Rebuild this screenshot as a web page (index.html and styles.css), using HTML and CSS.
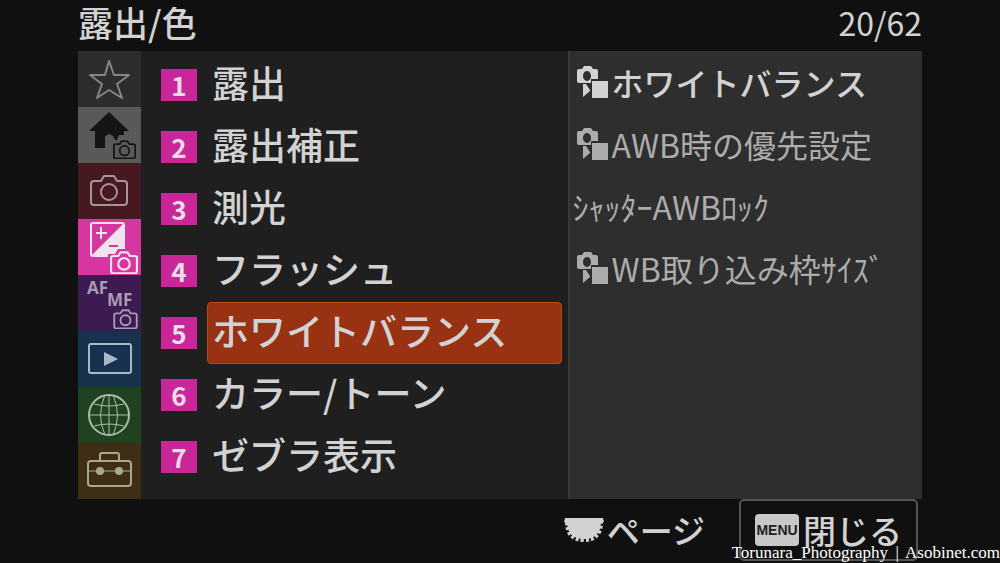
FILE: index.html
```html
<!DOCTYPE html>
<html lang="ja">
<head>
    <meta charset="UTF-8">
    <meta name="viewport" content="width=device-width, initial-scale=1.0">
    <title>露出/色</title>
    <link rel="stylesheet" href="styles.css">
</head>
<body>
    <!-- Shared icon shapes -->
    <svg class="symbols" aria-hidden="true">
        <symbol id="camera" viewBox="0 0 38 32">
            <path d="M4 7h7l3-5h10l3 5h7q3 0 3 3v18q0 3-3 3H4q-3 0-3-3V10q0-3 3-3z"/>
            <circle cx="19" cy="18" r="8"/>
        </symbol>
        <symbol id="still" viewBox="0 0 31 34">
            <path fill-rule="evenodd" d="M2 4h3l2-3h7l2 3h3q2 0 2 2v8h-7v4H2q-2 0-2-2V6q0-2 2-2zM10 6a4 5 0 1 0 0 10a4 5 0 0 0 0-10z"/>
            <path d="M6 19h3l4 6v1l-7 6z"/>
            <path d="M15 16h16v17H15z"/>
        </symbol>
    </svg>

    <div class="screen">
        <header>
            <h1>露出/色</h1>
            <span class="page-count">20/62</span>
        </header>

        <main>
            <nav class="tabs">
                <button class="tab tab-star" aria-label="マイメニュー">
                    <svg viewBox="0 0 63 56"><path d="M31 10l5 14h15L39 33l5 14-13-8-12 8 5-14-12-9h15z"/></svg>
                </button>
                <button class="tab tab-home" aria-label="メイン">
                    <svg viewBox="0 0 63 56">
                        <path class="solid" d="M31 5l20 19h-5v4h-5l-2 5h-2l-2-4q-5-4-8 1v11H17V24h-6z"/>
                        <use href="#camera" class="small" x="35" y="33" width="23" height="19"/>
                    </svg>
                </button>
                <button class="tab tab-shoot" aria-label="撮影">
                    <svg viewBox="0 0 63 56"><use href="#camera" x="12" y="11" width="38" height="32"/></svg>
                </button>
                <button class="tab tab-exposure" aria-label="露出/色">
                    <svg viewBox="0 0 63 56">
                        <path class="solid" d="M46 4v29l-4 4H13z"/>
                        <rect x="13" y="4" width="33" height="33" rx="2"/>
                        <path d="M18 14h11M23 8v12"/>
                        <path class="minus" d="M31 27h9"/>
                        <path class="cutout" d="M30 35h7l3-5h12l3 5h6v21H30z"/>
                        <use href="#camera" class="small" x="32" y="32" width="28" height="23"/>
                    </svg>
                </button>
                <button class="tab tab-focus" aria-label="フォーカス">
                    <svg viewBox="0 0 63 56">
                        <text x="9" y="19">AF</text>
                        <text x="29" y="31">MF</text>
                        <use href="#camera" class="small" x="34" y="34" width="27" height="20"/>
                    </svg>
                </button>
                <button class="tab tab-play" aria-label="再生">
                    <svg viewBox="0 0 63 56">
                        <rect x="11" y="13" width="42" height="29" rx="2"/>
                        <path class="solid" d="M26 21l14 7-14 7z"/>
                    </svg>
                </button>
                <button class="tab tab-network" aria-label="ネットワーク">
                    <svg viewBox="0 0 63 56">
                        <circle cx="31" cy="28" r="20"/>
                        <path class="thin" d="M11 28h40M31 8v40M16 17q15 4 30 0M16 39q15-4 30 0M27 8q-9 20 0 40M35 8q9 20 0 40"/>
                    </svg>
                </button>
                <button class="tab tab-setup" aria-label="セットアップ">
                    <svg viewBox="0 0 63 56">
                        <rect x="10" y="18" width="43" height="25" rx="3"/>
                        <path d="M22 17v-5q0-2 2-2h15q2 0 2 2v5"/>
                        <path class="thin" d="M11 28h42"/>
                        <circle class="solid" cx="22" cy="28" r="4"/>
                        <circle class="solid" cx="41" cy="28" r="4"/>
                    </svg>
                </button>
            </nav>

            <div class="menu">
                <button class="item"><span class="number">1</span><span class="label">露出</span></button>
                <button class="item"><span class="number">2</span><span class="label">露出補正</span></button>
                <button class="item"><span class="number">3</span><span class="label">測光</span></button>
                <button class="item"><span class="number">4</span><span class="label">フラッシュ</span></button>
                <button class="item selected"><span class="number">5</span><span class="label">ホワイトバランス</span></button>
                <button class="item"><span class="number">6</span><span class="label">カラー/トーン</span></button>
                <button class="item"><span class="number">7</span><span class="label">ゼブラ表示</span></button>
            </div>

            <div class="submenu">
                <button class="option current"><svg><use href="#still"/></svg>ホワイトバランス</button>
                <button class="option"><svg><use href="#still"/></svg>AWB時の優先設定</button>
                <button class="option no-icon">ｼｬｯﾀｰAWBﾛｯｸ</button>
                <button class="option"><svg><use href="#still"/></svg>WB取り込み枠ｻｲｽﾞ</button>
            </div>
        </main>

        <footer>
            <span class="hint">
                <svg viewBox="0 0 42 26">
                    <path d="M2 1h38l1 4H1zM4 4h34q0 18-17 18T4 4z"/>
                    <path class="teeth" d="M4 5q0 18 17 18T38 5"/>
                </svg>
                ページ
            </span>
            <button class="close"><span class="key">MENU</span>閉じる</button>
        </footer>
    </div>

    <p class="credit">Torunara_Photography <span class="bar">|</span> Asobinet.com</p>
</body>
</html>
```
FILE: styles.css
```css
* {
    margin: 0;
    padding: 0;
    box-sizing: border-box;
}

body {
    background-color: #101010;
    color: #d2d2d2;
    font-family: "Noto Sans CJK JP", sans-serif;
    overflow: hidden;
}

button {
    background: none;
    border: none;
    color: inherit;
    font: inherit;
    text-align: left;
    white-space: nowrap;
    cursor: pointer;
}

.symbols {
    position: absolute;
    width: 0;
    height: 0;
}

.screen {
    margin: 0 auto;
    width: 84.4%;
}

header {
    display: flex;
    justify-content: space-between;
    height: 51px;
    line-height: 44px;
}

h1 {
    font-size: 35px;
    font-weight: 500;
}

.page-count {
    font-size: 32px;
}

main {
    display: flex;
    background-color: #1f1f1f;
}

/* Category tabs */
.tabs {
    flex: none;
    width: 63px;
}

.tab {
    display: block;
    width: 100%;
    height: 56px;
}

.tab svg {
    display: block;
    width: 100%;
    height: 100%;
    fill: none;
    stroke: currentColor;
    stroke-width: 2;
    stroke-linejoin: round;
}

.tab .solid {
    fill: currentColor;
    stroke: none;
}

.tab .thin {
    stroke-width: 1;
}

.tab .small {
    stroke-width: 3;
}

.tab text {
    fill: currentColor;
    stroke: none;
    font-family: "Open Sans", sans-serif;
    font-size: 17px;
    font-weight: bold;
}

.tab-star {
    background-color: #2d2d2d;
    color: #858585;
}

.tab-home {
    background-color: #595959;
    color: #151515;
}

.tab-shoot {
    background-color: #45191f;
    color: #a59598;
}

.tab-exposure {
    background-color: #d6369f;
    color: #f0e4ec;
}

.tab-exposure .minus {
    stroke: #d6369f;
}

.tab-exposure .cutout {
    fill: #d6369f;
    stroke: none;
}

.tab-focus {
    background-color: #3d1a51;
    color: #a89bb2;
}

.tab-play {
    background-color: #17324f;
    color: #a9b8c4;
}

.tab-network {
    background-color: #204220;
    color: #a9bda9;
}

.tab-setup {
    background-color: #3f2e16;
    color: #aaa78f;
}

/* Menu groups */
.menu {
    flex: 1;
    padding: 3px 6px 3px 20px;
}

.item {
    display: flex;
    align-items: center;
    gap: 10px;
    width: 100%;
    height: 62px;
}

.number {
    width: 36px;
    background-color: #c9269a;
    color: #ebdde6;
    font-size: 26px;
    font-weight: bold;
    line-height: 32px;
    text-align: center;
}

.label {
    flex: 1;
    height: 62px;
    padding-left: 4px;
    border: 1px solid transparent;
    border-radius: 4px;
    font-size: 37px;
    font-weight: 500;
    line-height: 54px;
}

.selected .label {
    background-color: #983212;
    border-color: #b94a18;
}

/* Settings in the selected group */
.submenu {
    flex: none;
    width: 42%;
    padding-left: 7px;
    background-color: #2e2e2e;
    border-left: 2px solid #393939;
}

.option {
    display: flex;
    align-items: center;
    gap: 4px;
    width: 100%;
    height: 62px;
    color: #acacac;
    font-size: 32px;
    line-height: 60px;
}

.option svg {
    width: 31px;
    height: 34px;
    fill: currentColor;
}

.current {
    color: #d2d2d2;
    font-weight: 500;
}

.no-icon {
    margin-left: -4px;
}

/* Key hints */
footer {
    display: flex;
    justify-content: flex-end;
    gap: 34px;
    padding-right: 4px;
    font-size: 33px;
    font-weight: 500;
    line-height: 58px;
}

.hint {
    display: flex;
    align-items: center;
    gap: 2px;
}

.hint svg {
    width: 42px;
    height: 26px;
    fill: currentColor;
}

.hint .teeth {
    fill: none;
    stroke: currentColor;
    stroke-width: 4;
    stroke-dasharray: 3 2;
}

.close {
    display: flex;
    align-items: center;
    gap: 4px;
    height: 62px;
    padding: 0 14px;
    border: 2px solid #555;
    border-radius: 5px;
}

.key {
    width: 44px;
    border-radius: 4px;
    background-color: #c8c8c8;
    color: #202020;
    font-family: "Liberation Sans", sans-serif;
    font-size: 14px;
    font-weight: bold;
    line-height: 32px;
    text-align: center;
}

.credit {
    position: absolute;
    right: 0;
    bottom: 0;
    color: #fff;
    font-family: "Liberation Serif", serif;
    font-size: 17px;
    line-height: 20px;
}

.bar {
    padding: 0 3px;
}
```
